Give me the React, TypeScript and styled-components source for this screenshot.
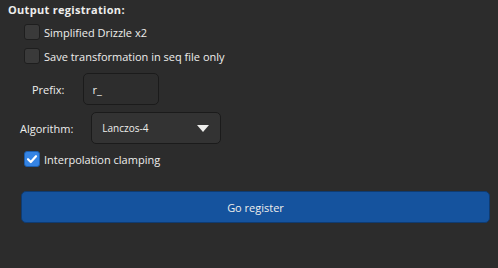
import React from "react";
import styled, { createGlobalStyle } from "styled-components";

const Global = createGlobalStyle`
  html, body {
    margin: 0;
    padding: 0;
    background: #2c2c2c;
  }
  body {
    font-family: "Open Sans", "DejaVu Sans", sans-serif;
    font-size: 11px;
    color: #eeeeec;
  }
`;

const Panel = styled.div`
  width: 498px;
  height: 268px;
  box-sizing: border-box;
  padding: 1px 8px 0 8px;
  display: flex;
  flex-direction: column;
`;

const Title = styled.div`
  font-weight: 700;
  font-size: 11px;
  letter-spacing: 0.3px;
  height: 19px;
  line-height: 18px;
`;

const CheckRow = styled.label<{ $height?: number }>`
  display: flex;
  align-items: center;
  gap: 4px;
  margin-left: 16px;
  height: ${({ $height }) => $height ?? 24}px;
`;

const Box = styled.span<{ $checked?: boolean }>`
  width: 16px;
  height: 16px;
  box-sizing: border-box;
  border-radius: 3px;
  border: 1px solid ${({ $checked }) => ($checked ? "#1b5eb0" : "#1e1e1e")};
  background: ${({ $checked }) => ($checked ? "#3584e4" : "#3a3a3a")};
  display: flex;
  align-items: center;
  justify-content: center;
`;

const FieldRow = styled.div<{ $indent: number; $gap: number }>`
  display: flex;
  align-items: center;
  padding-left: ${({ $indent }) => $indent}px;
  gap: ${({ $gap }) => $gap}px;
`;

const Label = styled.span``;

const Entry = styled.div`
  width: 76px;
  height: 32px;
  box-sizing: border-box;
  border: 1px solid #1b1b1b;
  border-radius: 5px;
  background: #2d2d2d;
  padding: 0 8px;
  display: flex;
  align-items: center;
  font-size: 11px;
`;

const Combo = styled.div`
  width: 130px;
  height: 32px;
  box-sizing: border-box;
  border: 1px solid #1b1b1b;
  border-radius: 5px;
  background: #333333;
  padding: 0 10px;
  display: flex;
  align-items: center;
  justify-content: space-between;
  font-size: 10px;
`;

const Arrow = styled.span`
  width: 0;
  height: 0;
  border-left: 6px solid transparent;
  border-right: 6px solid transparent;
  border-top: 7px solid #eeeeec;
  margin-right: 1px;
`;

const Button = styled.button`
  margin: 21px 0 0 13px;
  width: 469px;
  height: 32px;
  border: 1px solid #0f3b71;
  border-radius: 5px;
  background: #15539e;
  color: #eeeeec;
  font-family: "Open Sans", "DejaVu Sans", sans-serif;
  font-size: 11px;
`;

function Check({ checked }: { checked?: boolean }) {
  return (
    <Box $checked={checked}>
      {checked && (
        <svg width="12" height="12" viewBox="0 0 12 12">
          <path
            d="M2 6.2 L4.8 9 L10 3.2"
            fill="none"
            stroke="#ffffff"
            strokeWidth="2.2"
            strokeLinecap="round"
            strokeLinejoin="round"
          />
        </svg>
      )}
    </Box>
  );
}

export default function App() {
  return (
    <Panel>
      <Global />
      <Title>Output registration:</Title>
      <CheckRow>
        <Check />
        Simplified Drizzle x2
      </CheckRow>
      <CheckRow>
        <Check />
        Save transformation in seq file only
      </CheckRow>
      <FieldRow $indent={24} $gap={19} style={{ marginTop: 5 }}>
        <Label>Prefix:</Label>
        <Entry>r_</Entry>
      </FieldRow>
      <FieldRow $indent={12} $gap={18} style={{ marginTop: 7 }}>
        <Label>Algorithm:</Label>
        <Combo>
          Lanczos-4
          <Arrow />
        </Combo>
      </FieldRow>
      <CheckRow $height={22} style={{ marginTop: 4 }}>
        <Check checked />
        Interpolation clamping
      </CheckRow>
      <Button>Go register</Button>
    </Panel>
  );
}
